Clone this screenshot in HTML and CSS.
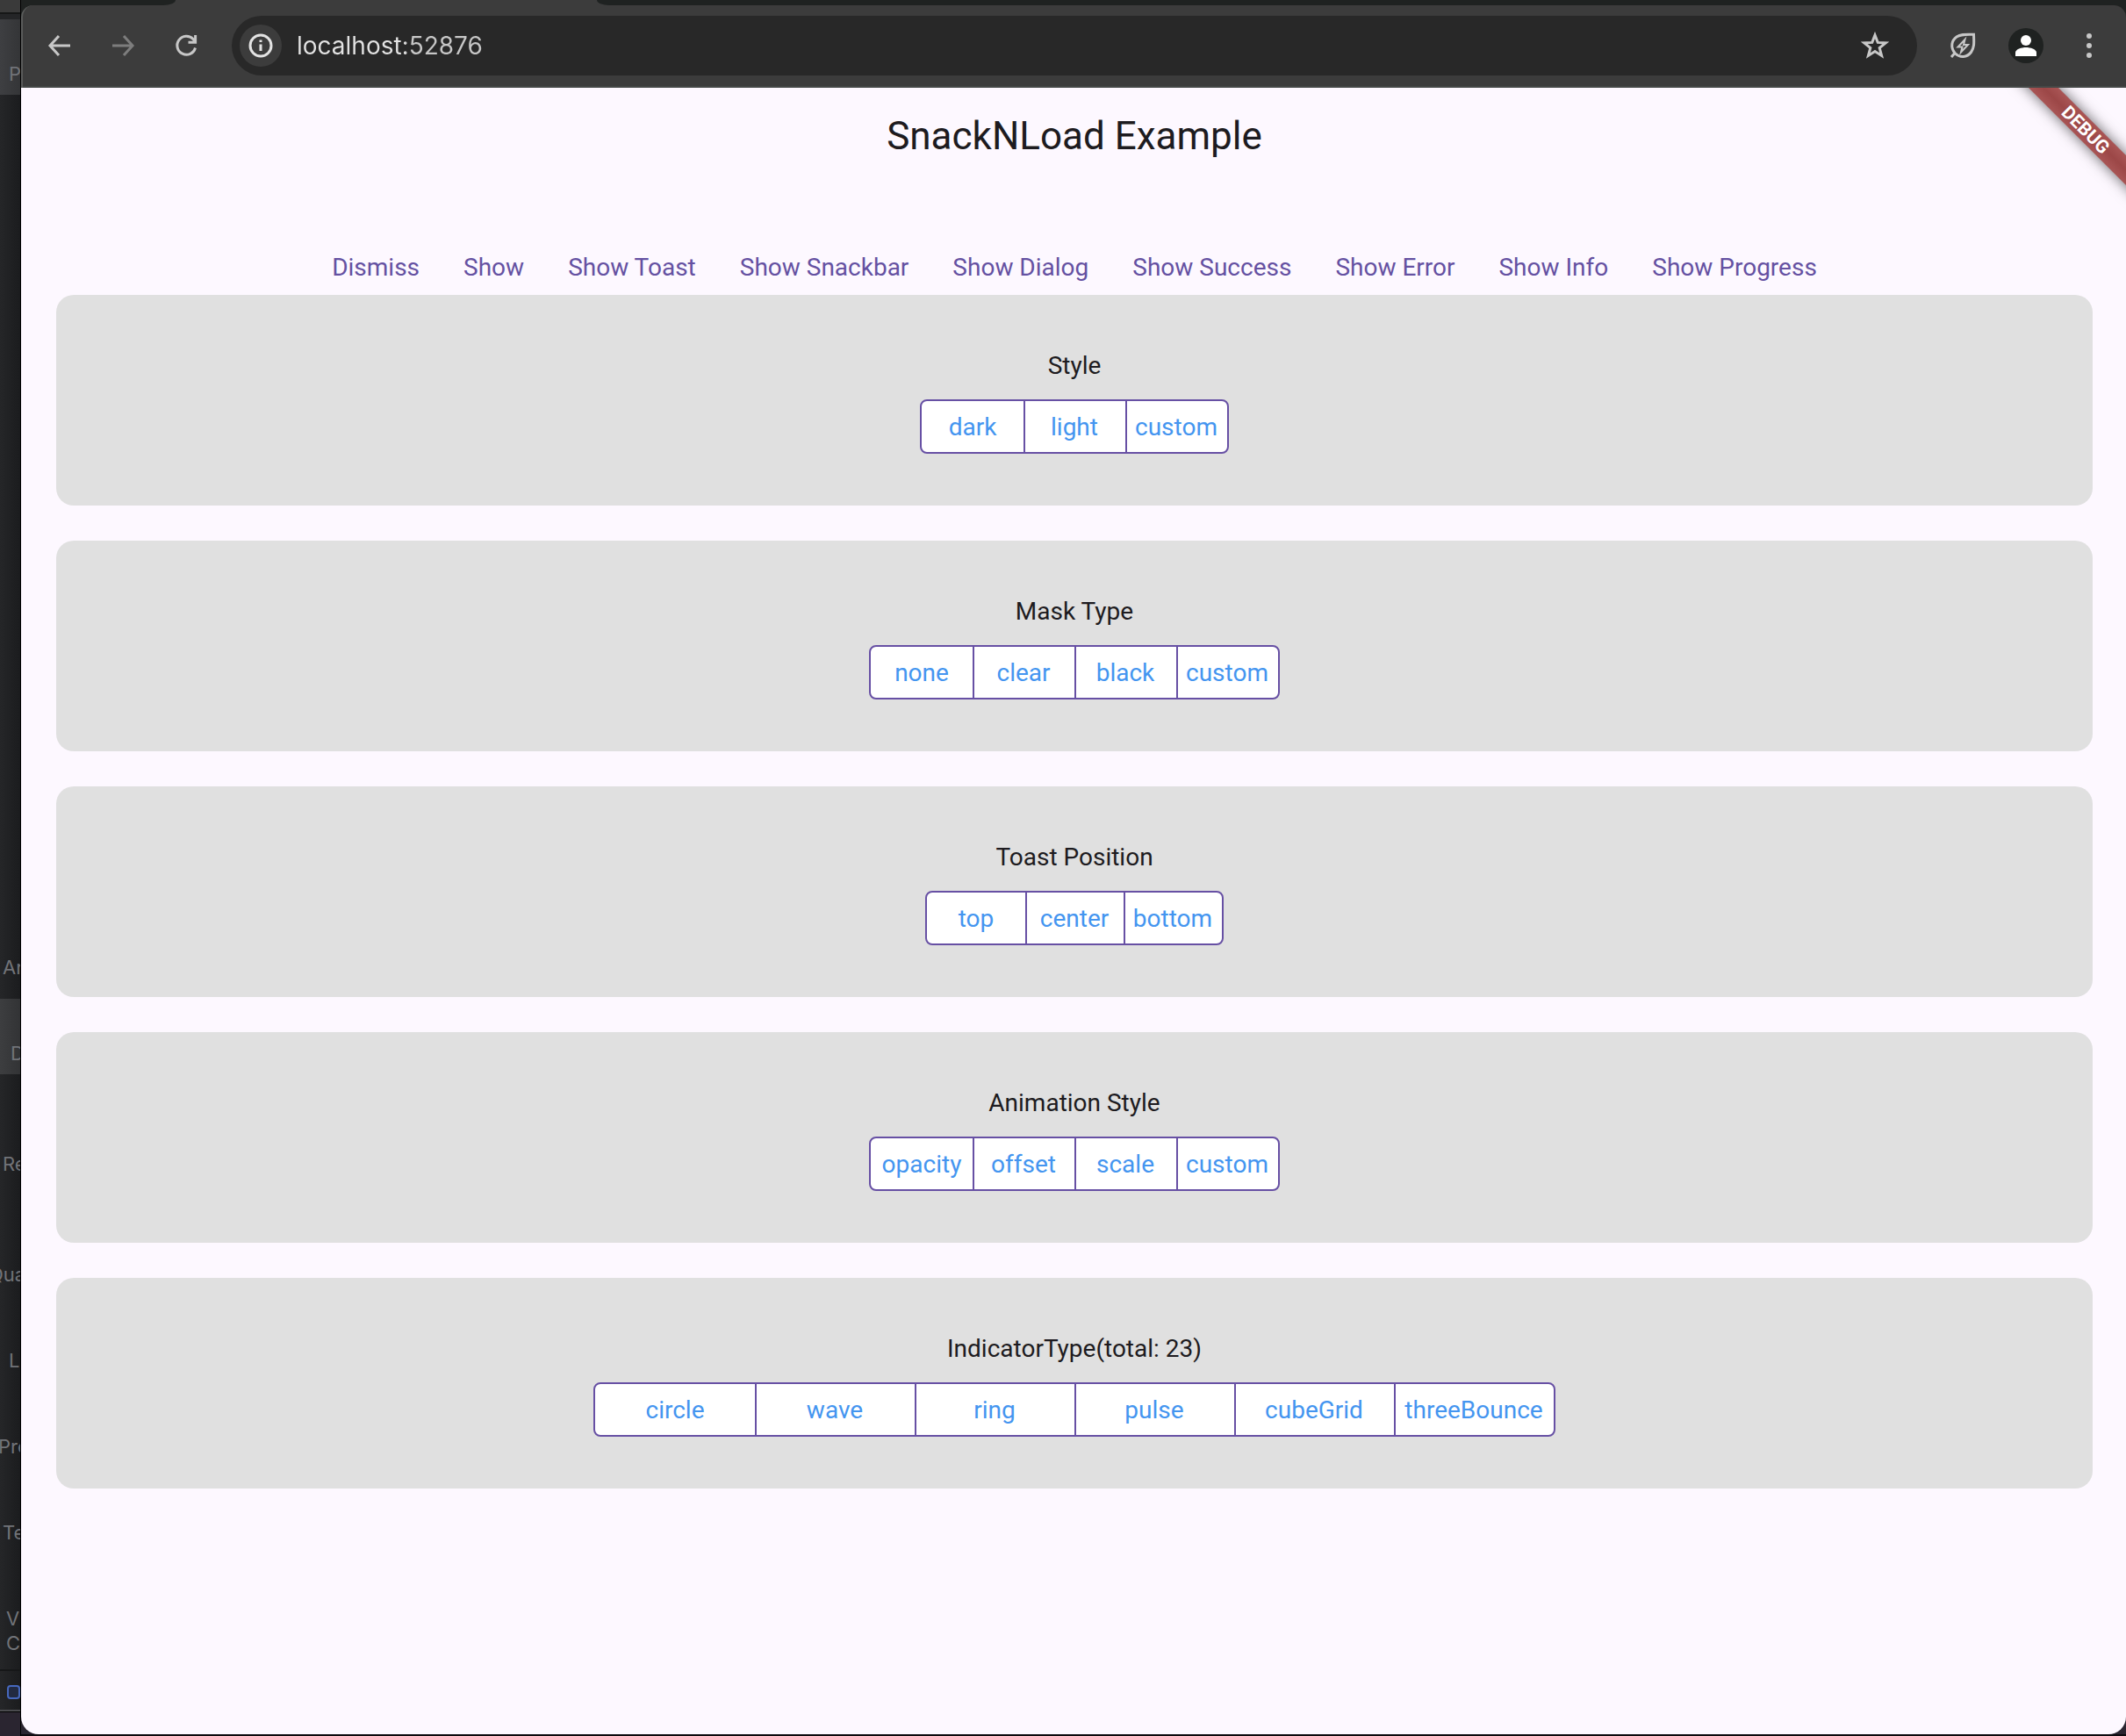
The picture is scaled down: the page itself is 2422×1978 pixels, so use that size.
FILE: index.html
```html
<!DOCTYPE html>
<html lang="en">
<head>
<meta charset="utf-8">
<meta name="viewport" content="width=device-width, initial-scale=1">
<title>SnackNLoad Example</title>
<link rel="stylesheet" href="styles.css">
</head>
<body>
<div class="desktop">
  <aside class="backdrop" aria-hidden="true">
    <div class="backdrop-bar"></div>
    <div class="backdrop-tab"><span class="label label-in">P</span></div>
    <div class="backdrop-list">
      <span class="label">Ar</span>
      <div class="selected"><span class="label label-far">D</span></div>
      <span class="label after-selected">Re</span>
      <span class="label wide">Qua</span>
      <span class="label spaced label-in">L</span>
      <span class="label spaced label-edge">Pre</span>
      <span class="label spaced">Te</span>
      <span class="label spaced label-mid">V</span>
      <span class="label label-mid">C</span>
    </div>
    <div class="backdrop-foot"><span class="check"></span></div>
    <div class="wallpaper"></div>
  </aside>

  <div class="window">
    <div class="tabstrip"><div class="tab-gap left"></div><div class="tab"></div><div class="tab-gap right"></div></div>
    <header class="toolbar">
      <div class="nav-buttons">
        <button class="icon-button" aria-label="Back">
          <svg viewBox="0 0 32 32" width="32" height="32"><path d="M28 16H5.500M15 5L5 16L15 27" /></svg>
        </button>
        <button class="icon-button dim" aria-label="Forward">
          <svg viewBox="0 0 32 32" width="32" height="32"><path d="M4 16H26.500M17 5L27 16L17 27" /></svg>
        </button>
        <button class="icon-button" aria-label="Reload">
          <svg viewBox="0 0 32 32" width="32" height="32"><path d="M26.500 18.500A10.500 10.500 0 1 1 24 8.500L26.500 11.500M26.600 4V12.200H18.500" /></svg>
        </button>
      </div>
      <div class="address">
        <button class="site-info" aria-label="Site information">
          <svg viewBox="0 0 32 32" width="32" height="32"><circle cx="16" cy="16" r="12" /><path d="M16 14.500V22M16 9.500V12" /></svg>
        </button>
        <input class="url" type="text" value="localhost:52876" aria-label="Address">
        <button class="icon-button star" aria-label="Bookmark">
          <svg viewBox="0 0 32 32" width="32" height="32"><path d="M16 4L19.200 12.400L28.300 12.900L21.200 18.600L23.600 27.400L16 22.500L8.400 27.400L10.800 18.600L3.700 12.900L12.800 12.400Z" /></svg>
        </button>
      </div>
      <div class="actions">
        <button class="icon-button" aria-label="Energy saver">
          <svg viewBox="0 0 32 32" width="32" height="32"><path d="M3 29L7 24.500C1.500 17 3.500 10 9 6C14 2.500 20 3.200 28.500 3.200C28.800 12 29.500 18 25.500 23.500C21 29.500 13 30.500 7 24.500" /><path class="bolt" d="M18.500 9L10.500 17.500H15.500L14 23.500L22 15H17Z" /></svg>
        </button>
        <button class="avatar" aria-label="Profile">
          <svg viewBox="0 0 40 40" width="40" height="40"><circle cx="20" cy="14" r="6" /><path d="M8 32V28C8 24 15 22 20 22S32 24 32 28V32Z" /></svg>
        </button>
        <button class="icon-button menu" aria-label="Menu">
          <svg viewBox="0 0 32 32" width="32" height="32"><circle cx="16" cy="5" r="3" /><circle cx="16" cy="16" r="3" /><circle cx="16" cy="27" r="3" /></svg>
        </button>
      </div>
    </header>

    <main class="page">
      <div class="banner">DEBUG</div>
      <h1 class="title">SnackNLoad Example</h1>
      <div class="commands">
        <button class="command">Dismiss</button>
        <button class="command">Show</button>
        <button class="command">Show Toast</button>
        <button class="command">Show Snackbar</button>
        <button class="command">Show Dialog</button>
        <button class="command">Show Success</button>
        <button class="command">Show Error</button>
        <button class="command">Show Info</button>
        <button class="command">Show Progress</button>
      </div>
      <div class="cards">
        <section class="card" aria-labelledby="style">
          <h2 class="card-title" id="style">Style</h2>
          <div class="segments" role="group" aria-labelledby="style">
            <button class="segment">dark</button><button class="segment">light</button><button class="segment">custom</button>
          </div>
        </section>
        <section class="card" aria-labelledby="mask">
          <h2 class="card-title" id="mask">Mask Type</h2>
          <div class="segments" role="group" aria-labelledby="mask">
            <button class="segment">none</button><button class="segment">clear</button><button class="segment">black</button><button class="segment">custom</button>
          </div>
        </section>
        <section class="card" aria-labelledby="position">
          <h2 class="card-title" id="position">Toast Position</h2>
          <div class="segments narrow-cells" role="group" aria-labelledby="position">
            <button class="segment">top</button><button class="segment">center</button><button class="segment">bottom</button>
          </div>
        </section>
        <section class="card" aria-labelledby="animation">
          <h2 class="card-title" id="animation">Animation Style</h2>
          <div class="segments" role="group" aria-labelledby="animation">
            <button class="segment">opacity</button><button class="segment">offset</button><button class="segment">scale</button><button class="segment">custom</button>
          </div>
        </section>
        <section class="card" aria-labelledby="indicator">
          <h2 class="card-title" id="indicator">IndicatorType(total: 23)</h2>
          <div class="segments wide-cells" role="group" aria-labelledby="indicator">
            <button class="segment">circle</button><button class="segment">wave</button><button class="segment">ring</button><button class="segment">pulse</button><button class="segment">cubeGrid</button><button class="segment">threeBounce</button>
          </div>
        </section>
      </div>
    </main>
  </div>
</div>
</body>
</html>
```
FILE: styles.css
```css
* {
  box-sizing: border-box;
}

body {
  margin: 0;
  background: #2a2530;
  font-family: Roboto, "Liberation Sans", sans-serif;
}

button,
input {
  margin: 0;
  padding: 0;
  border: 0;
  background: none;
  font: inherit;
}

.desktop {
  display: grid;
  grid-template-columns: 24px minmax(0, 1fr);
  min-height: 100vh;
}

/* Sliver of the editor window behind the browser */
.backdrop {
  display: flex;
  flex-direction: column;
  overflow: hidden;
  border-right: 1px solid #000;
  background: linear-gradient(to right, #252628, #1b1c1e);
  color: #717378;
  font-family: Inter, "Liberation Sans", sans-serif;
  font-size: 22px;
  line-height: 28px;
  white-space: nowrap;
}

.backdrop-bar {
  height: 22px;
  border-bottom: 6px solid #242527;
  background: linear-gradient(#3a3a3a 14px, #161717 0);
}

.backdrop-tab {
  height: 86px;
  padding-top: 48px;
  background: linear-gradient(to right, #3e3f42, #343537);
}

.backdrop-list {
  display: flex;
  flex-direction: column;
  margin-top: auto;
}

.label {
  display: block;
  padding-left: 3px;
}

.label-in {
  padding-left: 10px;
}

.label-far {
  padding-left: 12px;
}

.label-mid {
  padding-left: 7px;
}

.label-edge {
  padding-left: 0;
  text-indent: -2px;
}

.selected {
  margin-top: 22px;
  padding: 48px 0 10px;
  background: linear-gradient(to right, #3d3e40, #323335);
}

.after-selected {
  margin-top: 88px;
}

.wide {
  margin-top: 98px;
  text-indent: -16px;
}

.spaced {
  margin-top: 70px;
}

.backdrop-foot {
  height: 48px;
  margin-top: 16px;
  padding: 16px 0 0 8px;
  border-top: 2px solid #161718;
  border-bottom: 2px solid #4a4b4e;
}

.check {
  display: block;
  width: 15px;
  height: 16px;
  border: 2px solid #4668bd;
  border-radius: 4px;
  background: #222a42;
}

.wallpaper {
  height: 28px;
  border-top: 1px solid #000;
  background: #2a2530;
}

/* Browser window */
.window {
  display: flex;
  flex-direction: column;
  border-bottom: 2px solid #0c0a0e;
  background: linear-gradient(#1f2221 100px, #2a2530 0);
}

.tabstrip {
  display: grid;
  grid-template-columns: 176px 480px 1fr;
  height: 6px;
  background: #3c3c3c;
}

.tab-gap {
  background: #1f2221;
}

.tab-gap.left {
  border-bottom-right-radius: 14px 6px;
}

.tab-gap.right {
  border-bottom-left-radius: 14px 6px;
}

.toolbar {
  display: flex;
  align-items: center;
  gap: 32px;
  height: 94px;
  padding: 0 22px 2px 20px;
  border-left: 2px solid #5a5c5b;
  border-radius: 14px 14px 0 0;
  background: #3c3c3c;
  box-shadow: inset 0 -2px 0 #454847;
}

.nav-buttons {
  display: flex;
  gap: 32px;
  padding-left: 2px;
}

.icon-button {
  display: grid;
  place-items: center;
  width: 40px;
  height: 40px;
}

.icon-button svg {
  fill: none;
  stroke: #c7c7c7;
  stroke-width: 3;
}

.icon-button .bolt {
  stroke-width: 2;
}

.icon-button.dim svg {
  stroke: #7d7d7d;
}

.icon-button.menu svg {
  fill: #c7c7c7;
  stroke: none;
}

.address {
  display: flex;
  flex: 1;
  align-items: center;
  gap: 17px;
  height: 68px;
  padding: 0 28px 0 9px;
  border-radius: 34px;
  background: #282828;
}

.site-info {
  display: grid;
  place-items: center;
  width: 48px;
  height: 48px;
  border-radius: 50%;
  background: #3c3c3c;
}

.site-info svg {
  fill: none;
  stroke: #e3e3e3;
  stroke-width: 3;
}

.url {
  flex: 1;
  height: 40px;
  background: linear-gradient(to right, #e3e3e3 124px, #c7c7c7 0);
  background-clip: text;
  -webkit-background-clip: text;
  color: #e3e3e3;
  -webkit-text-fill-color: transparent;
  font-family: Inter, "Liberation Sans", sans-serif;
  font-size: 28px;
}

.actions {
  display: flex;
  gap: 32px;
}

.avatar {
  width: 40px;
  height: 40px;
  border-radius: 50%;
  background: #1f2221;
}

.avatar svg {
  display: block;
  fill: #fff;
}

/* App page */
.page {
  position: relative;
  flex: 1;
  overflow: hidden;
  padding: 0 38px 40px 40px;
  border-radius: 0 0 20px 20px;
  background: #fdf8ff;
  color: #1d1b20;
}

.title {
  margin: 0 0 62px;
  font-size: 44px;
  font-weight: 400;
  line-height: 110px;
  text-align: center;
}

.commands {
  display: flex;
  flex-wrap: wrap;
  justify-content: center;
}

.command {
  height: 64px;
  padding: 2px 25px 0;
  color: #6551a2;
  font-size: 28px;
  line-height: 40px;
}

.cards {
  display: flex;
  flex-direction: column;
  gap: 40px;
}

.card {
  display: flex;
  flex-direction: column;
  align-items: center;
  gap: 18px;
  padding: 61px 20px 59px;
  border-radius: 20px;
  background: #e0e0e0;
}

.card-title {
  margin: 0;
  font-size: 28px;
  font-weight: 400;
  line-height: 40px;
}

.segments {
  display: inline-grid;
  grid-auto-flow: column;
  grid-auto-columns: 116px;
  overflow: hidden;
  border: 2px solid #6750a4;
  border-radius: 8px;
  background: #fff;
}

.narrow-cells {
  grid-auto-columns: 112px;
}

.wide-cells {
  grid-auto-columns: 182px;
}

.segment {
  height: 58px;
  padding-top: 2px;
  color: #4495f0;
  font-size: 28px;
  line-height: 40px;
}

.segment + .segment {
  box-shadow: inset 2px 0 0 #6750a4;
}

.banner {
  position: absolute;
  top: 36px;
  right: -54px;
  width: 200px;
  height: 24px;
  background: linear-gradient(#a95555, #9c4747 50%, #a95555);
  box-shadow: 0 0 16px rgba(0, 0, 0, 0.6);
  color: #fff;
  font-size: 21px;
  font-weight: 700;
  line-height: 24px;
  text-align: center;
  transform: rotate(45deg);
}
```
